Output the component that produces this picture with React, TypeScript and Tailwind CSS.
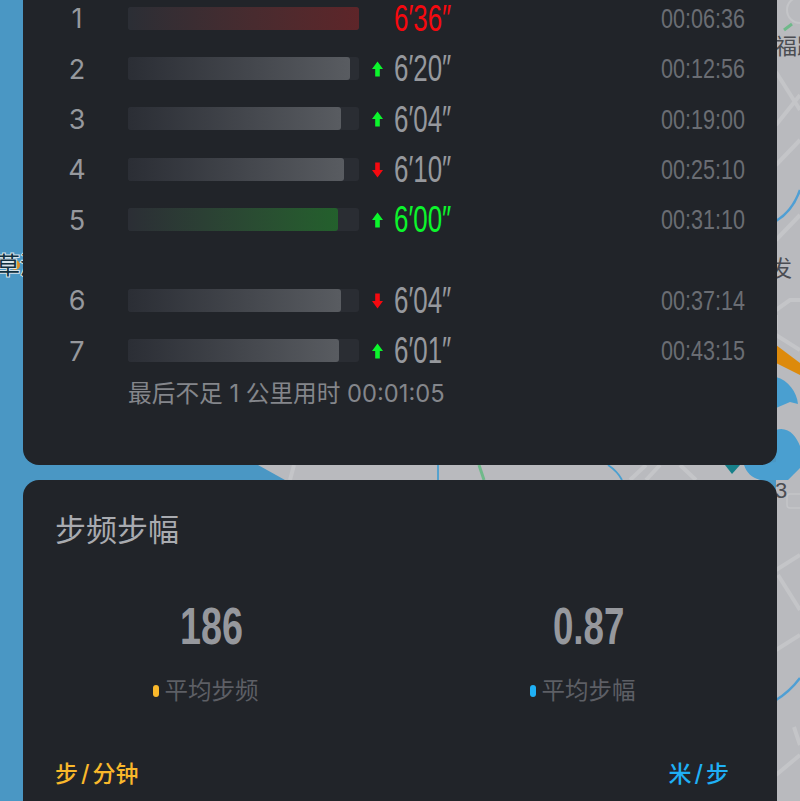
import React from 'react';

type Split = { n: number; w: number; trend?: 'up' | 'down'; pace: string; total: string; tone?: 'slow' | 'fast' };

const splits: Split[] = [
  { n: 1, w: 231, pace: '6′36″', total: '00:06:36', tone: 'slow' },
  { n: 2, w: 222, trend: 'up', pace: '6′20″', total: '00:12:56' },
  { n: 3, w: 213, trend: 'up', pace: '6′04″', total: '00:19:00' },
  { n: 4, w: 216, trend: 'down', pace: '6′10″', total: '00:25:10' },
  { n: 5, w: 210, trend: 'up', pace: '6′00″', total: '00:31:10', tone: 'fast' },
  { n: 6, w: 213, trend: 'down', pace: '6′04″', total: '00:37:14' },
  { n: 7, w: 211, trend: 'up', pace: '6′01″', total: '00:43:15' },
];

const Arrow = ({ dir }: { dir: 'up' | 'down' }) => (
  <svg width="11" height="16" viewBox="0 0 11 16" className={`mt-[1px] ${dir === 'down' ? 'rotate-180' : ''}`}>
    <path d="M5.5 0.5 L11 8 H7.8 V15.5 H3.2 V8 H0 Z" fill={dir === 'up' ? '#0cf52c' : '#f5090f'} />
  </svg>
);

const Condensed = ({ children, className }: { children: React.ReactNode; className: string }) => (
  <span className={`inline-block font-['Liberation_Sans',sans-serif] ${className}`}>{children}</span>
);

const Row = ({ s }: { s: Split }) => {
  const barColor =
    s.tone === 'slow'
      ? 'from-[#2b2e35] to-[#5e2529]'
      : s.tone === 'fast'
        ? 'from-[#2b2e35] to-[#23602c]'
        : 'from-[#2b2e35] to-[#595c61]';
  const paceColor = s.tone === 'slow' ? 'text-[#f5090f]' : s.tone === 'fast' ? 'text-[#0cf52c]' : 'text-[#96989d]';
  return (
    <div className="flex h-[50.3px] items-center">
      <div className="w-[105px] pl-[3px] pt-[3px] text-center">
        <span className="text-[27px] text-[#96989d]">{s.n}</span>
      </div>
      <div className="h-[23px] w-[231px] rounded-[3px] bg-[#2a2d33]">
        <div className={`h-full rounded-[3px] bg-gradient-to-r ${barColor}`} style={{ width: s.w }} />
      </div>
      <div className="flex w-[35px] justify-end pr-[11px]">{s.trend && <Arrow dir={s.trend} />}</div>
      <Condensed className={`mt-[2px] origin-left scale-x-[0.72] text-[36px] ${paceColor}`}>{s.pace}</Condensed>
      <Condensed className="ml-auto mr-[32px] mt-[2px] origin-right scale-x-[0.77] text-[28px] text-[#6a6d73]">{s.total}</Condensed>
    </div>
  );
};

const MapBackground = () => (
  <svg width="800" height="801" viewBox="0 0 800 801" className="absolute inset-0">
    <rect width="800" height="801" fill="#4a97c4" />
    <path d="M258 465 H800 V801 H776 V480 H285 Z" fill="#b9babe" />
    <path d="M776 0 H800 V801 H776 Z" fill="#b9babe" />
    {/* roads */}
    <g stroke="#c4c5c8" strokeWidth="4" fill="none">
      <path d="M776 72 L800 110 M776 125 L800 95 M776 165 L800 140 M776 240 L800 215" />
      <path d="M776 310 L790 300 H800 M776 335 L800 350 M776 315 V330" />
      <path d="M776 570 L800 555 M778 575 L800 610 M776 650 L800 635 M776 775 L800 755 M794 727 L800 745" />
      <path d="M294 465 L290 480 M630 480 L646 465 M646 480 L660 465 M680 465 L696 480 M745 465 L760 480" />
    </g>
    {/* water */}
    <path d="M776 377 C788 380 797 392 798 404 L790 402 L776 408 Z" fill="#4a9fd0" />
    <path d="M776 430 C788 426 796 436 800 446 V468 L794 474 L788 480 H760 C752 478 746 472 744 465 L776 462 Z" fill="#4a9fd0" />
    <path d="M776 345 L800 363 V375 L776 363 Z" fill="#dd8a0c" />
    {/* routes */}
    <path d="M776 221 C788 214 795 204 800 190 M776 700 C786 694 794 686 800 678" stroke="#4f9fd4" strokeWidth="2.5" fill="none" />
    <path d="M784 30 L792 24" stroke="#6fb98a" strokeWidth="3" />
    <path d="M479 465 L484 480" stroke="#6fb98a" strokeWidth="3" />
    <path d="M438 465 V480 M608 465 C614 469 619 474 622 480" stroke="#4a9fd0" strokeWidth="1.8" fill="none" />
    <path d="M725 465 H740 L732 474 Z" fill="#17808a" />
    <rect x="787" y="494" width="16" height="14" rx="3" fill="none" stroke="#c4c5c8" strokeWidth="1.5" />
    <circle cx="800" cy="10" r="13" fill="none" stroke="#c4c5c8" strokeWidth="2" />
    <text x="775" y="54" fontSize="22" fill="#4b4d52" fontFamily="'Noto Sans CJK SC', sans-serif">福路</text>
    <text x="770" y="276" fontSize="22" fill="#4b4d52" fontFamily="'Noto Sans CJK SC', sans-serif">发 ·</text>
    <circle cx="15" cy="265" r="5" fill="#e08b22" />
    <text x="-4" y="274" fontSize="24" fill="#10303f" stroke="#d8e4ea" strokeWidth="2" paintOrder="stroke" fontFamily="'Noto Sans CJK SC', sans-serif">草湖</text>
    <text x="775" y="498" fontSize="22" fill="#4b4d52" fontFamily="'Liberation Sans', sans-serif">3</text>
  </svg>
);

export default function App() {
  return (
    <div className="relative h-[801px] w-[800px] overflow-hidden font-['Inter','Noto_Sans_CJK_SC',sans-serif]">
      <MapBackground />
      <div className="relative flex flex-col gap-[15px] px-[23px]">
        <section className="h-[465px] rounded-b-[16px] bg-[#212429]">
          <div className="-mt-[7px]">
            {splits.slice(0, 5).map((s) => <Row key={s.n} s={s} />)}
            <div className="h-[30.5px]" />
            {splits.slice(5).map((s) => <Row key={s.n} s={s} />)}
          </div>
          <p className="mt-[3px] pl-[105px] text-[23.7px] leading-[30px] text-[#84868b]">最后不足 1 公里用时 00:01:05</p>
        </section>
        <section className="h-[400px] rounded-t-[16px] bg-[#212429] px-[32px] pt-[30px]">
          <h2 className="text-[31px] leading-[40px] text-[#a9abb0]">步频步幅</h2>
          <div className="-mx-[32px] mt-[46px] grid grid-cols-2">
            <div className="flex flex-col items-center">
              <Condensed className="scale-x-[0.74] text-[51px] leading-[62px] font-bold text-[#96989d]">186</Condensed>
              <div className="mt-[16px] flex items-center gap-[6px] pr-[12px] text-[23.5px] leading-[34px] text-[#5d5f65]">
                <span className="h-[12px] w-[6px] rounded-full bg-[#f9b82b]" />
                平均步频
              </div>
            </div>
            <div className="flex flex-col items-center">
              <Condensed className="scale-x-[0.72] text-[51px] leading-[62px] font-bold text-[#96989d]">0.87</Condensed>
              <div className="mt-[16px] flex items-center gap-[6px] pr-[12px] text-[23.5px] leading-[34px] text-[#5d5f65]">
                <span className="h-[12px] w-[6px] rounded-full bg-[#1fb0f5]" />
                平均步幅
              </div>
            </div>
          </div>
          <div className="mt-[50px] flex justify-between pr-[16px] text-[23px] leading-[32px] font-medium">
            <span className="text-[#f9b82b]">步<span className="px-[3px]">/</span>分钟</span>
            <span className="text-[#1fb0f5]">米<span className="px-[3px]">/</span>步</span>
          </div>
        </section>
      </div>
    </div>
  );
}
